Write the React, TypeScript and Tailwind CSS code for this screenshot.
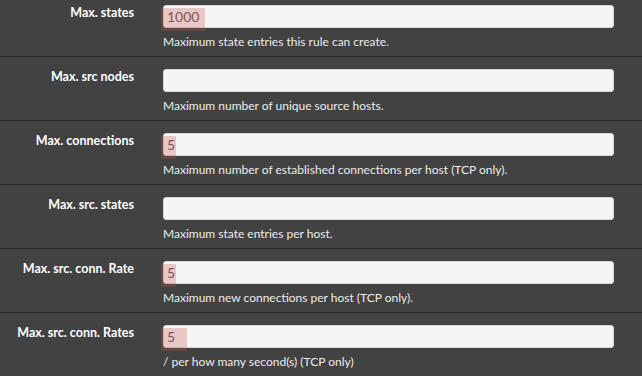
import React from 'react';

type Row = {
  label: string;
  value: string;
  help: string;
  mark?: number;
};

const rows: Row[] = [
  { label: 'Max. states', value: '1000', help: 'Maximum state entries this rule can create.', mark: 44 },
  { label: 'Max. src nodes', value: '', help: 'Maximum number of unique source hosts.' },
  { label: 'Max. connections', value: '5', help: 'Maximum number of established connections per host (TCP only).', mark: 15 },
  { label: 'Max. src. states', value: '', help: 'Maximum state entries per host.' },
  { label: 'Max. src. conn. Rate', value: '5', help: 'Maximum new connections per host (TCP only).', mark: 15 },
  { label: 'Max. src. conn. Rates', value: '5', help: '/ per how many second(s) (TCP only)', mark: 26 },
];

export default function App() {
  return (
    <div className="w-[642px] h-[376px] overflow-hidden bg-[#424242] font-['Lato','Noto_Sans',sans-serif]">
      {rows.map((row, i) => (
        <div
          key={row.label}
          className={`flex pb-[5px] ${i === 0 ? 'pt-[5px]' : 'pt-[12px] border-t border-[#2a2a2a]'}`}
        >
          <div className="w-[134px] shrink-0 text-right text-[12.5px] leading-[16px] font-bold text-white">
            {row.label}
          </div>
          <div className="ml-[29px] w-[451px]">
            <div className="relative">
              <input
                readOnly
                value={row.value}
                className="block w-full h-[23px] rounded-[3px] bg-[#f5f5f5] border border-[#d8d8d8] px-[3px] text-[14px] text-[#5e5e5e] outline-none"
              />
              {row.mark && (
                <div
                  className="absolute left-[-2px] top-[3px] h-[23px] bg-[rgba(200,78,78,0.27)] pointer-events-none"
                  style={{ width: row.mark }}
                />
              )}
            </div>
            <p className="mt-[5px] text-[12px] leading-[18px] text-[#ececec] whitespace-nowrap">{row.help}</p>
          </div>
        </div>
      ))}
    </div>
  );
}
